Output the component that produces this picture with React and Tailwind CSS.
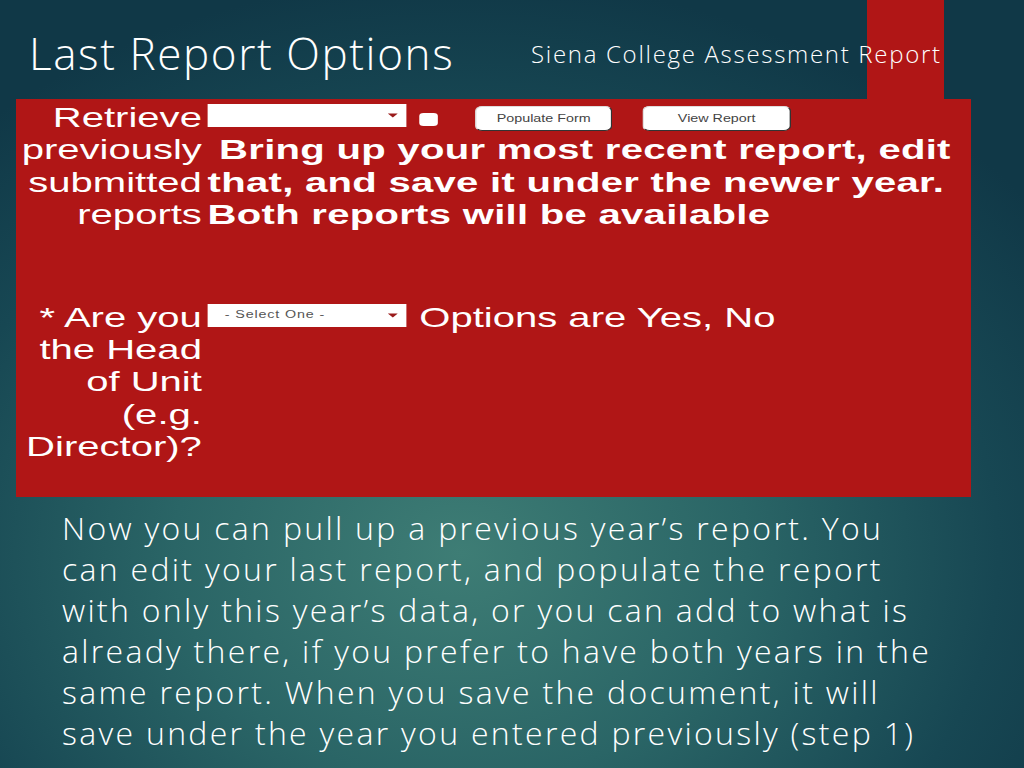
import React from 'react';

// Small down-pointing arrow used in the fake selects
const Caret = () => (
  <svg viewBox="0 0 10 6" className="w-[7px] h-[5px]">
    <polygon points="0,0 10,0 5,6" fill="#9a1b1b" />
  </svg>
);

const SelectBox = ({ text }) => (
  <div className="w-[139px] h-[23px] bg-white flex items-center justify-between pl-[12px] pr-[6px] shrink-0">
    <span className="text-[10px] tracking-[0.6px] text-[#555] leading-none">{text}</span>
    <Caret />
  </div>
);

const FormButton = ({ label, width }) => (
  <div
    className={`${width} h-[25px] bg-white rounded-[5px] border border-[#ddd] border-r-[#333] border-b-[#333] flex items-center justify-center shrink-0`}
  >
    <span className="text-[10px] text-[#444] leading-none">{label}</span>
  </div>
);

const App = () => {
  const paragraph = [
    'Now you can pull up a previous year’s report. You',
    'can edit your last report, and populate the report',
    'with only this year’s data, or you can add to what is',
    'already there, if you prefer to have both years in the',
    'same report. When you save the document, it will',
    'save under the year you entered previously (step 1)'
  ];

  return (
    <div className="w-[1024px] h-[768px] overflow-hidden bg-[radial-gradient(ellipse_70%_75%_at_45%_72%,#3e7d75_0%,#2a6566_40%,#174753_75%,#103847_100%)] font-['Open_Sans',sans-serif] text-white">

      {/* Slide header */}
      <div className="relative h-[99px] flex items-start">
        <div className="absolute left-[867px] top-0 w-[77px] h-[99px] bg-[#b01616]"></div>
        <h1 className="relative w-[531px] pl-[29px] pt-[25px] text-[44px] leading-[56px] font-light tracking-[1.6px] whitespace-nowrap">
          Last Report Options
        </h1>
        <div className="relative pt-[39px] text-[24px] leading-[30px] font-light tracking-[1.7px] whitespace-nowrap">
          Siena College Assessment Report
        </div>
      </div>

      {/* Screenshot of the form, stretched horizontally */}
      <div className="ml-[16px] w-[955px] h-[398px] bg-[#b01616] overflow-hidden">
        <div className="w-[668px] origin-top-left scale-x-[1.43] pt-[3px] font-['Liberation_Sans',Arial,sans-serif] text-[28px] leading-[32.4px]">

          {/* Retrieve row */}
          <div className="grid grid-cols-[130px_1fr] gap-[4px]">
            <div className="text-right">
              <div>Retrieve</div>
              <div>previously</div>
              <div>submitted</div>
              <div>reports</div>
            </div>
            <div>
              <div className="h-[32.4px] flex items-start">
                <div className="mt-[2px]"><SelectBox text="" /></div>
                <div className="ml-[9px] mt-[11px] w-[13px] h-[13px] bg-white rounded-[3px]"></div>
                <div className="ml-[26px] mt-[4px]"><FormButton label="Populate Form" width="w-[96px]" /></div>
                <div className="ml-[21px] mt-[4px]"><FormButton label="View Report" width="w-[104px]" /></div>
              </div>
              <div className="font-bold whitespace-nowrap tracking-[0.2px]">
                <div className="pl-[8px]">Bring up your most recent report, edit</div>
                <div>that, and save it under the newer year.</div>
                <div>Both reports will be available</div>
              </div>
            </div>
          </div>

          {/* Head of unit row */}
          <div className="grid grid-cols-[130px_1fr] gap-[4px] mt-[70px]">
            <div className="text-right">
              <div>* Are you</div>
              <div>the Head</div>
              <div>of Unit</div>
              <div>(e.g.</div>
              <div>Director)?</div>
            </div>
            <div className="h-[32.4px] flex items-start">
              <div className="mt-[2px]"><SelectBox text="- Select One -" /></div>
              <div className="ml-[9px] whitespace-nowrap">Options are Yes, No</div>
            </div>
          </div>
        </div>
      </div>

      {/* Explanation */}
      <div className="pl-[62px] pt-[10px] text-[32px] leading-[41px] font-light tracking-[2.3px] whitespace-nowrap">
        {paragraph.map((line) => (
          <div key={line}>{line}</div>
        ))}
      </div>
    </div>
  );
};

export default App;
